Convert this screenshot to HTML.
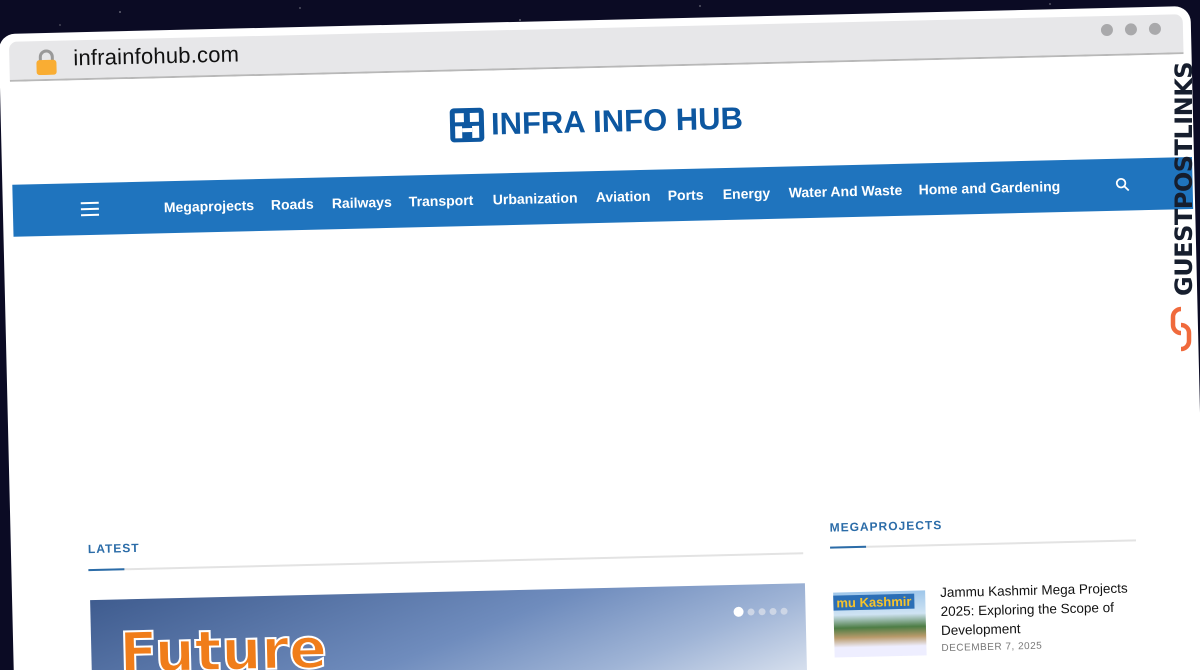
<!DOCTYPE html>
<html><head><meta charset="utf-8"><style>
*{margin:0;padding:0;box-sizing:border-box}
html,body{width:1200px;height:670px;overflow:hidden;background:#0b0b24;font-family:"Liberation Sans",sans-serif;position:relative}
.stars{position:absolute;inset:0;background:
radial-gradient(1px 1px at 120px 12px,#fff,transparent),radial-gradient(1px 1px at 300px 8px,#ccc,transparent),
radial-gradient(1px 1px at 520px 20px,#fff,transparent),radial-gradient(1px 1px at 700px 6px,#ddd,transparent),
radial-gradient(1px 1px at 880px 15px,#fff,transparent),radial-gradient(1px 1px at 1050px 4px,#ccc,transparent),
radial-gradient(1px 1px at 60px 25px,#aaa,transparent),radial-gradient(1px 1px at 420px 30px,#bbb,transparent)}
.clip{position:absolute;left:0;top:0;width:1200px;height:670px;overflow:hidden}
.stage{position:absolute;left:0;top:0;width:1200px;height:670px;transform:rotate(-1.35deg);transform-origin:600px 335px}
.win{position:absolute;left:6px;top:20px;width:1192px;height:680px;background:#fff;border-radius:16px 16px 0 0}
.bar{position:absolute;left:16px;top:28px;width:1174px;height:40px;background:#e7e7e9;border-bottom:2px solid #b8b8b8;border-radius:8px 8px 0 0}
.lock{position:absolute;left:42px;top:36px;width:22px;height:26px}
.url{position:absolute;left:80px;top:33px;font-size:22px;color:#111;letter-spacing:.2px}
.dot{position:absolute;top:36px;width:12px;height:12px;border-radius:50%;background:#a9a9ab}
.logo{position:absolute;left:454px;top:104px;height:36px;display:flex;align-items:center;gap:6px;color:#0d57a0;font-weight:700;font-size:31px;letter-spacing:0}
.nav{position:absolute;left:16px;top:171px;width:1180px;height:52px;background:#1f74be}
.nav span{position:absolute;top:18px;color:#fff;font-size:14px;font-weight:600}
.ham{position:absolute;left:68px;top:19px;width:18px;height:14px;border-top:2px solid #fff;border-bottom:2px solid #fff}
.ham:after{content:"";position:absolute;left:0;top:4px;width:18px;height:2px;background:#fff}
.sec{position:absolute;font-size:12px;font-weight:600;color:#2b6ca8;letter-spacing:1px}
.line{position:absolute;height:2px;background:#e3e3e3}
.acc{position:absolute;height:2px;background:#2b6ca8}
.hero{position:absolute;left:84px;top:588px;width:715px;height:100px;background:linear-gradient(160deg,#3f5c8f 0%,#6f8cbd 50%,#9fb4d6 75%,#dfe6f1 100%)}
.fut{position:absolute;left:28px;top:22px;font-size:56px;font-weight:900;color:#f07d1a;-webkit-text-stroke:2px #fff;font-family:"DejaVu Sans",sans-serif}
.dots{position:absolute;right:18px;top:22px;display:flex;gap:4px;align-items:center}
.dots i{width:7px;height:7px;border-radius:50%;background:#cdd6e6}
.dots i:first-child{width:10px;height:10px;background:#fff}
.thumb{position:absolute;left:827px;top:598px;width:92px;height:65px;background:linear-gradient(#9ec6ea 0%,#cfe3f3 35%,#4d7d45 55%,#b99a6a 70%,#eef 85%)}
.thumb b{position:absolute;left:0;top:3px;font-size:13px;color:#f6c32c;background:#2c6fb6;padding:0 3px}
.t{position:absolute;left:934px;top:591px;width:200px;font-size:13.5px;line-height:19px;color:#111;font-weight:500}
.d{position:absolute;left:934px;top:651px;font-size:10px;color:#777;letter-spacing:.5px}
.gpl{position:absolute;left:1167px;top:60px;width:30px;height:300px}
.gpl div{position:absolute;left:0;top:0;transform-origin:0 0;transform:translate(3px,236px) rotate(-90deg);font-weight:900;font-size:24px;color:#161e2e;letter-spacing:-.5px;white-space:nowrap;font-family:"DejaVu Sans",sans-serif}
</style></head><body>
<div class="stars"></div>
<div class="clip">
<div class="stage">
<div class="win"></div>
<div class="bar"></div>
<svg class="lock" viewBox="0 0 22 26"><path d="M5 12V8a6 6 0 0 1 12 0v4" fill="none" stroke="#999" stroke-width="3"/><rect x="1" y="11" width="20" height="15" rx="3" fill="#f9ad33"/></svg>
<div class="url">infrainfohub.com</div>
<div class="dot" style="left:1108px"></div><div class="dot" style="left:1132px"></div><div class="dot" style="left:1156px"></div>
<div class="logo"><svg width="36" height="36" viewBox="0 0 36 36"><rect x="1" y="1" width="34" height="34" rx="4" fill="#0d57a0"/><rect x="6" y="6" width="9" height="9" fill="#fff"/><rect x="21" y="6" width="9" height="9" fill="#fff"/><rect x="6" y="19" width="7" height="12" fill="#fff"/><rect x="23" y="19" width="7" height="12" fill="#fff"/><rect x="13" y="21" width="10" height="4" fill="#fff"/></svg><span>INFRA INFO HUB</span></div>
<div class="nav"><div class="ham"></div>
<span style="left:151px">Megaprojects</span><span style="left:258px">Roads</span><span style="left:319px">Railways</span><span style="left:396px">Transport</span><span style="left:480px">Urbanization</span><span style="left:583px">Aviation</span><span style="left:655px">Ports</span><span style="left:710px">Energy</span><span style="left:776px">Water And Waste</span><span style="left:906px">Home and Gardening</span>
<svg style="position:absolute;left:1103px;top:19px" width="14" height="14" viewBox="0 0 14 14"><circle cx="5.5" cy="5.5" r="4.3" fill="none" stroke="#fff" stroke-width="1.8"/><path d="M8.6 8.6L13 13" stroke="#fff" stroke-width="1.8"/></svg></div>
<div class="sec" style="left:83px;top:530px">LATEST</div>
<div class="line" style="left:83px;top:557px;width:715px"></div><div class="acc" style="left:83px;top:557px;width:36px"></div>
<div class="sec" style="left:825px;top:526px">MEGAPROJECTS</div>
<div class="line" style="left:825px;top:552px;width:306px"></div><div class="acc" style="left:825px;top:552px;width:36px"></div>
<div class="hero"><div class="fut">Future</div><div class="dots"><i></i><i></i><i></i><i></i><i></i></div></div>
<div class="thumb"><b>mu Kashmir</b></div>
<div class="t">Jammu Kashmir Mega Projects 2025: Exploring the Scope of Development</div>
<div class="d">DECEMBER 7, 2025</div>
</div>
<div class="gpl"><div>GUESTPOSTLINKS</div>
<svg style="position:absolute;left:2px;top:245px" width="24" height="48" viewBox="0 0 24 48"><path d="M12 4a8 8 0 0 0-8 8v8a8 8 0 0 0 8 8M12 20a8 8 0 0 1 8 8v8a8 8 0 0 1-8 8" fill="none" stroke="#f06a3c" stroke-width="4.5"/></svg></div>
</div>
</body></html>
